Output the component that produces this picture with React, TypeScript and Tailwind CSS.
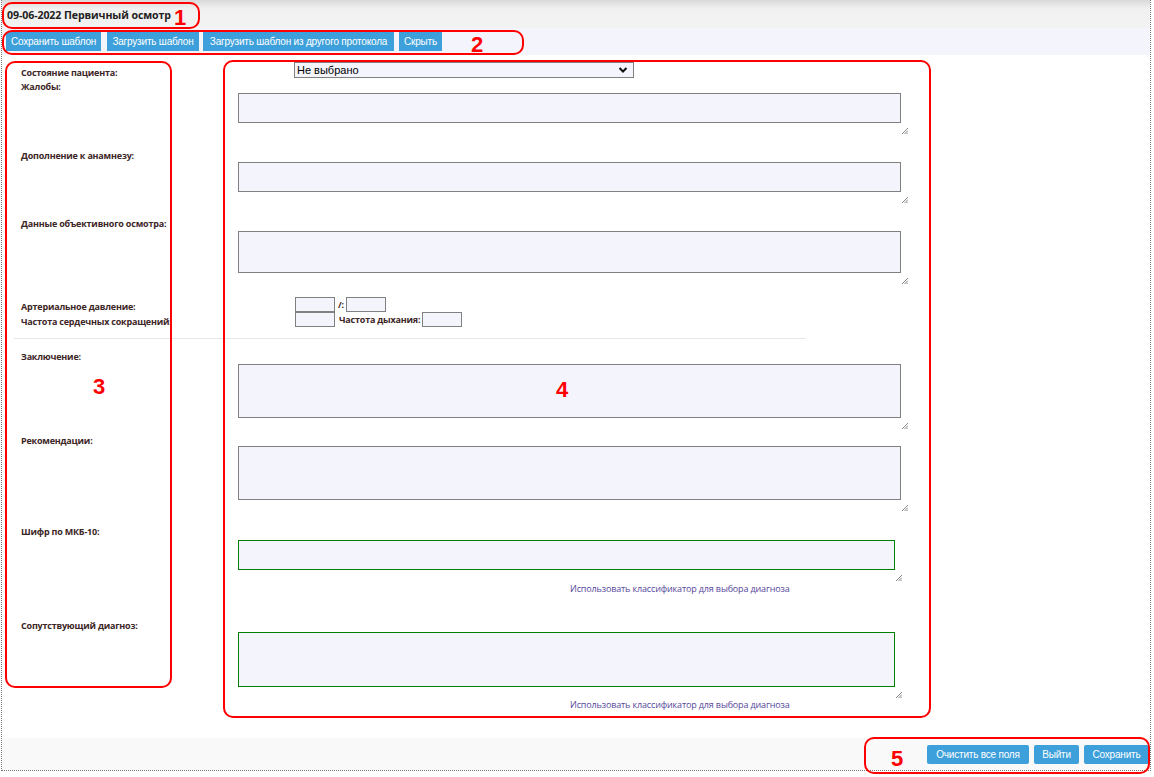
import React from 'react';

const Grip = () => (
  <svg width="6" height="6" viewBox="0 0 6 6" className="block">
    <path d="M6 0L0 6M6 2.5L2.5 6M6 4.5L4.5 6" stroke="#8a8a8a" strokeWidth="1" />
  </svg>
);

const Area = ({ className }: { className: string }) => (
  <div className="relative w-fit">
    <textarea className={'block resize-none bg-[#f4f4fc] outline-none ' + className} />
    <div className="absolute right-[-7px] bottom-[-11px]">
      <Grip />
    </div>
  </div>
);

const Label = ({ children, className = '' }: { children: React.ReactNode; className?: string }) => (
  <div className={'text-[9px] tracking-[-0.2px] leading-[14px] font-bold text-[#3d2626] whitespace-nowrap ' + className}>{children}</div>
);

const SmallInput = () => (
  <input className="block w-[40px] h-[15px] border border-[#808080] bg-[#f4f4fc] outline-none" />
);

const Mark = ({ className, n, numClass }: { className: string; n: string; numClass: string }) => (
  <div className={'absolute border-2 border-[#ff0000] rounded-[10px] pointer-events-none ' + className}>
    <span className={"absolute font-['Liberation_Sans',sans-serif] font-bold text-[22px] leading-none text-[#ff0000] " + numClass}>
      {n}
    </span>
  </div>
);

const App: React.FC = () => {
  const toolBtn = "h-[19px] bg-[#3ea0da] text-white text-[10px] tracking-[-0.2px] whitespace-nowrap leading-[19px] text-center font-['Liberation_Sans',sans-serif]";
  const footBtn = "h-[19px] rounded-[2px] bg-[#3ea0da] text-white text-[10px] tracking-[-0.2px] whitespace-nowrap leading-[19px] text-center font-['Liberation_Sans',sans-serif]";
  const link = "text-[9px] tracking-[-0.15px] leading-[12px] text-[#55479b] ml-[332px] whitespace-nowrap";

  return (
    <div className="relative w-[1154px] h-[777px] bg-white overflow-hidden font-['Open_Sans',sans-serif]">
      <div className="ml-[1px] w-[1150px] h-[771px] border-x border-b border-dotted border-[#777] flex flex-col">
        {/* header */}
        <div className="h-[28px] bg-[linear-gradient(#d9d9d9,#f1f1f1_9px,#f2f2f2)] pl-[5px] pt-[4px] flex items-center">
          <span className="text-[10.6px] tracking-[-0.1px] font-bold text-[#222]">09-06-2022 Первичный осмотр</span>
        </div>

        {/* toolbar */}
        <div className="h-[27px] bg-[#f4f4fc] pt-[4px] pl-[4px] flex items-start">
          <button className={toolBtn + ' w-[95px]'}>Сохранить шаблон</button>
          <button className={toolBtn + ' w-[92px] ml-[6px]'}>Загрузить шаблон</button>
          <button className={toolBtn + ' w-[191px] ml-[4px]'}>Загрузить шаблон из другого протокола</button>
          <button className={toolBtn + ' w-[43px] ml-[5px]'}>Скрыть</button>
        </div>

        {/* form */}
        <div className="h-[683px]">
          <div className="flex h-[283px]">
            <div className="w-[236px] pl-[19px] pt-[11px]">
              <Label>Состояние пациента:</Label>
              <Label>Жалобы:</Label>
              <Label className="mt-[55px]">Дополнение к анамнезу:</Label>
              <Label className="mt-[54px]">Данные объективного осмотра:</Label>
              <Label className="mt-[69px]">Артериальное давление:</Label>
              <Label className="mt-[1px]">Частота сердечных сокращений:</Label>
            </div>
            <div className="flex-1 pt-[7px]">
              <div className="relative ml-[56px] w-[340px] h-[16px] border border-[#808080] bg-[#f4f4fc] flex items-center">
                <span className="pl-[2px] text-[11px] text-black font-['Liberation_Sans',sans-serif]">Не выбрано</span>
                <svg width="10" height="8" viewBox="0 0 10 8" className="absolute right-[5px] top-[3px]">
                  <path d="M1.5 2L5 5.5L8.5 2" stroke="#111" strokeWidth="2" fill="none" />
                </svg>
              </div>
              <div className="mt-[15px]">
                <Area className="w-[663px] h-[30px] border border-[#808080]" />
              </div>
              <div className="mt-[39px]">
                <Area className="w-[663px] h-[30px] border border-[#808080]" />
              </div>
              <div className="mt-[39px]">
                <Area className="w-[663px] h-[42px] border border-[#808080]" />
              </div>
              <div className="mt-[24px] ml-[57px] flex items-center">
                <SmallInput />
                <span className="ml-[3px] mr-[2px] text-[9px] tracking-[-0.2px] font-bold text-[#3d2626]">/:</span>
                <SmallInput />
              </div>
              <div className="ml-[57px] flex items-center">
                <SmallInput />
                <span className="ml-[4px] mr-[2px] text-[9px] tracking-[-0.2px] font-bold text-[#3d2626]">Частота дыхания:</span>
                <SmallInput />
              </div>
            </div>
          </div>

          <div className="h-px bg-[#e6e6e6] ml-[12px] w-[792px]" />

          <div className="flex">
            <div className="w-[236px] pl-[19px] pt-[11px]">
              <Label>Заключение:</Label>
              <Label className="mt-[70px]">Рекомендации:</Label>
              <Label className="mt-[77px]">Шифр по МКБ-10:</Label>
              <Label className="mt-[80px]">Сопутствующий диагноз:</Label>
            </div>
            <div className="flex-1 pt-[25px]">
              <Area className="w-[663px] h-[54px] border border-[#808080]" />
              <div className="mt-[28px]">
                <Area className="w-[663px] h-[54px] border border-[#808080]" />
              </div>
              <div className="mt-[40px]">
                <Area className="w-[657px] h-[30px] border border-[#008000]" />
              </div>
              <div className={link + ' mt-[13px]'}>Использовать классификатор для выбора диагноза</div>
              <div className="mt-[37px]">
                <Area className="w-[657px] h-[55px] border border-[#008000]" />
              </div>
              <div className={link + ' mt-[12px]'}>Использовать классификатор для выбора диагноза</div>
            </div>
          </div>
        </div>

        {/* footer */}
        <div className="h-[32px] bg-[#f9f9f9] flex justify-end items-start pt-[7px] pr-[1px]">
          <button className={footBtn + ' w-[102px]'}>Очистить все поля</button>
          <button className={footBtn + ' w-[45px] ml-[5px]'}>Выйти</button>
          <button className={footBtn + ' w-[65px] ml-[5px]'}>Сохранить</button>
        </div>
      </div>

      {/* annotations */}
      <Mark className="left-[2px] top-[2px] w-[198px] h-[27px]" n="1" numClass="left-[170px] top-[3px]" />
      <Mark className="left-[2px] top-[30px] w-[522px] h-[25px]" n="2" numClass="left-[467px] top-[2px]" />
      <Mark className="left-[5px] top-[61px] w-[167px] h-[627px]" n="3" numClass="left-[86px] top-[313px]" />
      <Mark className="left-[223px] top-[60px] w-[708px] h-[658px]" n="4" numClass="left-[331px] top-[317px]" />
      <Mark className="left-[864px] top-[737px] w-[286px] h-[37px]" n="5" numClass="left-[25px] top-[9px]" />
    </div>
  );
};

export default App;
